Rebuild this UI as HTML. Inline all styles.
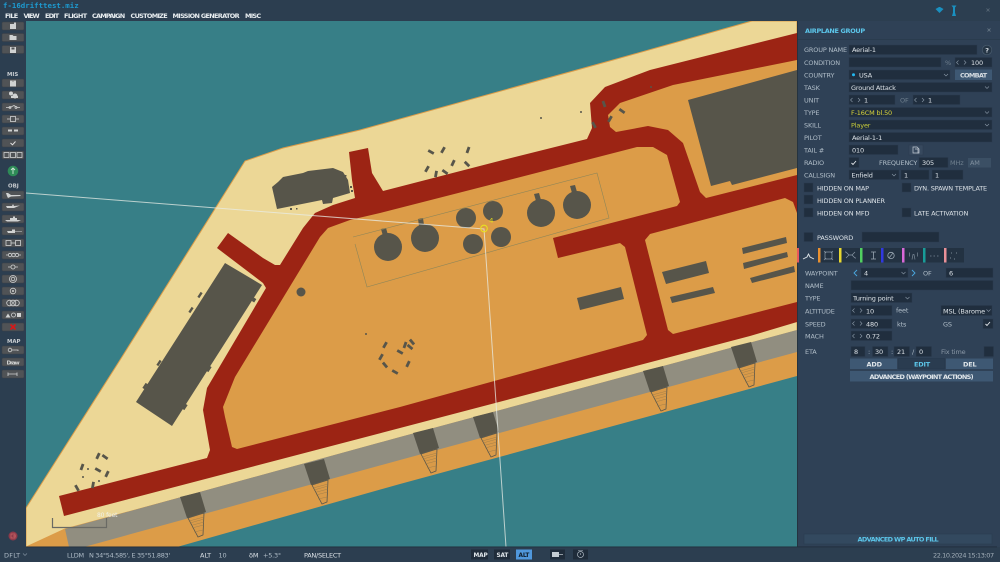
<!DOCTYPE html>
<html><head><meta charset="utf-8"><style>
html,body{margin:0;padding:0;background:#2c3e50;width:1000px;height:562px;overflow:hidden}
svg{display:block}
#root{filter:blur(.25px)}
text{font-family:"DejaVu Sans","Liberation Sans",sans-serif;font-size:6.5px;letter-spacing:-.15px;fill:#b0bdc8}
.m{font-weight:bold;fill:#e8edf0;font-size:6.5px}
.v{fill:#dde3e8}
.i{fill:#202e3e;stroke:#2a3a4c;stroke-width:.5}
.b{fill:#3e5873}
.h{font-weight:bold;fill:#5cc6ea}
.t{fill:#505356;stroke:#3a3e44;stroke-width:.5}
.ic{fill:#d0d2d2;stroke:none}
.il{fill:none;stroke:#d0d2d2;stroke-width:.8}
.d{fill:#57554a}
.c{fill:none;stroke:#8a99a8;stroke-width:.6}
</style></head><body>
<svg id="root" width="1000" height="562" viewBox="0 0 1000 562" xmlns="http://www.w3.org/2000/svg">
<defs>
<polyline id="c" class="c" points="-2,-1 0,1 2,-1"/>
<g id="sp"><polyline class="c" points="1.5,-2 -.5,0 1.5,2"/><polyline class="c" points="7,-2 9,0 7,2"/></g>
<g id="pier">
<polygon class="d" points="0,0 20,-5 26,15 7,21"/>
<polygon points="8,21 24,16 23,38 18,40" fill="#d99a48" stroke="#57554a" stroke-width=".8"/>
<path d="M9,24 L24,20 M10,26 L24,22 M11,28.500 L24,25 M12,31 L23.500,28 M14,35 L23,33" stroke="#96794a" stroke-width=".4" fill="none"/>
</g>
<rect id="v" x="-3.2" y="-1.4" width="6.4" height="2.8" fill="#57554a"/>
</defs>

<rect width="1000" height="562" fill="#2c3e50"/>
<!-- map -->
<rect x="26" y="21" width="771" height="526" fill="#377f87"/>
<svg x="26" y="21" width="771" height="526" viewBox="26 21 771 526">
<polygon points="26,508 120,360 245,161 283,148 360,130 613,60 752,21 797,21 797,331 65,529 26,547" fill="#ecd796" stroke="#dc9c48" stroke-width="1"/>
<polygon points="26,547 65,529 400,437 797,330 797,376 400,484 177,547" fill="#dc9c48"/>
<polygon points="65,529 400,437 797,330 797,352 400,460 84,547 69,547" fill="#918e80"/>
<polygon fill="#9c2414" points="59,496 207,458 210,450 203,410 207,388 266,288 263,283 217,248 228,233 263,258 275,265 280,265 303,228 315,213 333,205 355,198 352,180 349,152 368,148 372,173 383,191 503,160 587,139 592,128 590,103 605,87 650,70 797,33 797,322 750,336 400,428 64,516"/>
<polygon fill="#dc9c48" points="232,447 237,449 400,407 643,340 647,335 625,247 620,243 558,258 553,238 677,206 680,202 667,155 653,147 637,147 540,172 380,213 350,220 328,228 320,237 235,377 223,407 225,417"/>
<polygon fill="#dc9c48" points="645,240 650,234 785,198 793,202 797,213 797,302 673,334 668,330"/>
<polygon fill="#dc9c48" points="608,115 620,103 673,85 797,60 797,175 706,198 700,192 683,143 668,130 648,126 616,132 610,127"/>
<!-- buildings -->
<polygon class="d" points="688,100 797,70 797,168 732,185 730,181 711,186"/>
<polygon class="d" points="225,263 262,285 172,426 136,402"/>
<g class="d"><rect x="-2" y="-1.500" width="4" height="3" transform="translate(254,300) rotate(-57)"/><rect x="-3" y="-1.200" width="6" height="2.400" transform="translate(209,369) rotate(-57)"/><rect x="-3" y="-1.200" width="6" height="2.400" transform="translate(185,407) rotate(-57)"/><rect x="-3" y="-1.200" width="6" height="2.400" transform="translate(145,386) rotate(-57)"/><rect x="-3" y="-1.200" width="6" height="2.400" transform="translate(159,363) rotate(-57)"/><rect x="-3" y="-1.200" width="6" height="2.400" transform="translate(191,310) rotate(-57)"/><rect x="-3" y="-1.200" width="6" height="2.400" transform="translate(200,295) rotate(-57)"/></g>
<polygon class="d" points="272,187 278,182 283,177 303,173 308,171 333,168 343,172 348,180 350,193 333,198 332,203 323,204 322,200 277,209"/>
<g fill="#57554a"><rect x="350" y="186" width="2" height="2"/><rect x="351" y="190" width="2" height="2"/><rect x="345" y="175" width="1.500" height="1.500"/><rect x="290" y="208" width="2" height="2"/><rect x="296" y="208" width="1.500" height="1.500"/></g>
<!-- tanks -->
<g fill="#57554a">
<circle cx="388" cy="247" r="14"/><circle cx="425" cy="238" r="14"/><circle cx="466" cy="218" r="10"/><circle cx="493" cy="211" r="10"/><circle cx="473" cy="244" r="10"/><circle cx="501" cy="237" r="10"/><circle cx="541" cy="213" r="14"/><circle cx="577" cy="205" r="14"/>
<polygon points="381,229 386,228 388,235 383,236"/><polygon points="418,219 423,218 424,225 419,226"/><polygon points="534,194 539,193 541,200 536,201"/><polygon points="570,186 575,185 577,192 572,193"/>
<circle cx="301" cy="292" r="4.500"/>
<polygon points="662,272 706,261 709,273 666,284"/><polygon points="670,297 713,287 715,293 672,303"/><polygon points="742,248 786,237 787,243 743,254"/><polygon points="743,263 787,252 788,257 744,269"/><polygon points="750,278 794,266 795,272 752,283"/><polygon points="577,298 621,287 624,299 580,310"/>
</g>
<polyline points="355,244 367,287 609,218 597,173 353,237" fill="none" stroke="#8f8658" stroke-width=".6"/>
<!-- piers -->
<use href="#pier" x="180" y="497"/><use href="#pier" x="304" y="464"/><use href="#pier" x="413" y="433"/><use href="#pier" x="473" y="417"/><use href="#pier" x="643" y="371"/><use href="#pier" x="731" y="347"/>
<!-- vehicles -->
<use href="#v" transform="translate(427,169) rotate(-60)"/><use href="#v" transform="translate(436,174) rotate(-80)"/><use href="#v" transform="translate(445,172) rotate(35)"/><use href="#v" transform="translate(453,163) rotate(-65)"/><use href="#v" transform="translate(467,164) rotate(45)"/><use href="#v" transform="translate(443,150) rotate(-60)"/><use href="#v" transform="translate(431,152) rotate(30)"/><use href="#v" transform="translate(468,150) rotate(-70)"/>
<use href="#v" transform="translate(98,456) rotate(-65)"/><use href="#v" transform="translate(105,457) rotate(35)"/><use href="#v" transform="translate(82,467) rotate(-70)"/><use href="#v" transform="translate(98,470) rotate(30)"/><use href="#v" transform="translate(107,474) rotate(-65)"/><use href="#v" transform="translate(77,488) rotate(60)"/><use href="#v" transform="translate(93,485) rotate(-80)"/>
<use href="#v" transform="translate(385,345) rotate(-60)"/><use href="#v" transform="translate(405,345) rotate(-70)"/><use href="#v" transform="translate(412,342) rotate(50)"/><use href="#v" transform="translate(400,352) rotate(30)"/><use href="#v" transform="translate(385,365) rotate(50)"/><use href="#v" transform="translate(410,347) rotate(40)"/><use href="#v" transform="translate(408,364) rotate(-65)"/><use href="#v" transform="translate(395,372) rotate(30)"/><use href="#v" transform="translate(381,357) rotate(-60)"/>
<use href="#v" transform="translate(604,104) rotate(70)"/><use href="#v" transform="translate(622,111) rotate(35)"/><use href="#v" transform="translate(610,119) rotate(-60)"/><use href="#v" transform="translate(594,125) rotate(60)"/>
<g fill="#57554a"><circle cx="581" cy="112" r="1"/><circle cx="541" cy="118" r="1"/><circle cx="651" cy="87" r="1"/><circle cx="366" cy="334" r="1"/><circle cx="83" cy="477" r="1"/><circle cx="88" cy="469" r="1"/><circle cx="99" cy="481" r="1"/></g>
<!-- route -->
<polyline points="26,193 484,229 506,547" fill="none" stroke="#e8ece6" stroke-opacity=".75" stroke-width="1"/>
<circle cx="484" cy="228.500" r="3.300" fill="none" stroke="#e8e020" stroke-width="1.100"/>
<text x="489" y="223" style="font-size:7px;fill:#e0d820">4</text>
<!-- scale -->
<polyline points="52.500,518 52.500,527.500 106.500,527.500 106.500,518" fill="none" stroke="#6a6a64" stroke-width="1.200"/>
<text x="97" y="517" style="font-size:6px;fill:#f0f0e8">80 feet</text>
</svg>

<!-- title + menu -->
<text x="3" y="8" style="font-family:'DejaVu Sans Mono','Liberation Mono',monospace;font-size:7.400px;letter-spacing:0;font-weight:bold;fill:#1d9ad0">f-16drifttest.miz</text>
<text class="m" x="5" y="18" textLength="13">FILE</text>
<text class="m" x="23.500" y="18" textLength="16">VIEW</text>
<text class="m" x="45" y="18" textLength="14">EDIT</text>
<text class="m" x="64" y="18" textLength="23">FLIGHT</text>
<text class="m" x="92" y="18" textLength="33">CAMPAIGN</text>
<text class="m" x="130.500" y="18" textLength="37">CUSTOMIZE</text>
<text class="m" x="172.500" y="18" textLength="67">MISSION GENERATOR</text>
<text class="m" x="245" y="18" textLength="16">MISC</text>

<!-- left toolbar -->
<g>
<rect class="t" x="2" y="22" width="22" height="8" rx="1"/><rect class="t" x="2" y="33.500" width="22" height="8" rx="1"/><rect class="t" x="2" y="45.500" width="22" height="8" rx="1"/>
<rect class="t" x="2" y="79" width="22" height="8" rx="1"/><rect class="t" x="2" y="91" width="22" height="8" rx="1"/><rect class="t" x="2" y="103" width="22" height="8" rx="1"/><rect class="t" x="2" y="115" width="22" height="8" rx="1"/><rect class="t" x="2" y="127" width="22" height="8" rx="1"/><rect class="t" x="2" y="139" width="22" height="8" rx="1"/><rect class="t" x="2" y="151" width="22" height="8" rx="1"/>
<rect class="t" x="2" y="191" width="22" height="8" rx="1"/><rect class="t" x="2" y="203" width="22" height="8" rx="1"/><rect class="t" x="2" y="215" width="22" height="8" rx="1"/><rect class="t" x="2" y="227" width="22" height="8" rx="1"/><rect class="t" x="2" y="239" width="22" height="8" rx="1"/><rect class="t" x="2" y="251" width="22" height="8" rx="1"/><rect class="t" x="2" y="263" width="22" height="8" rx="1"/><rect class="t" x="2" y="275" width="22" height="8" rx="1"/><rect class="t" x="2" y="287" width="22" height="8" rx="1"/><rect class="t" x="2" y="299" width="22" height="8" rx="1"/><rect class="t" x="2" y="311" width="22" height="8" rx="1"/><rect class="t" x="2" y="323" width="22" height="8" rx="1"/>
<rect class="t" x="2" y="346" width="22" height="8" rx="1"/><rect class="t" x="2" y="358" width="22" height="8" rx="1"/><rect class="t" x="2" y="370" width="22" height="8" rx="1"/>
<path class="ic" d="M10,24h4v-1.500h2v6.500h-6z"/>
<path class="ic" d="M9.500,35h3l1,1h3v4h-7z"/>
<path class="ic" d="M10,47h6v6h-6z"/><rect x="11.500" y="47.500" width="3" height="2" fill="#505356"/>
<text x="7" y="76" style="font-size:5.400px;letter-spacing:0;font-weight:bold;fill:#c8ccd0">MIS</text>
<path class="ic" d="M10,80.500h6v6h-6z"/><rect x="12" y="80" width="2" height="1.500" fill="#8a8a8a"/>
<path class="ic" d="M11,96h7v2h-7z"/><circle class="ic" cx="11" cy="93.500" r="2"/><circle class="ic" cx="15" cy="96" r="2.500"/>
<path class="il" d="M6,107.500h4l4,-2l3,2h3"/><circle class="il" cx="10" cy="107.500" r="1"/><circle class="il" cx="16" cy="107.500" r="1"/>
<path class="il" d="M7,119h3m6,0h3"/><rect class="il" x="10.500" y="116.500" width="5" height="5"/>
<rect class="ic" x="8" y="129.500" width="4" height="2"/><rect class="ic" x="14" y="129.500" width="4" height="2"/>
<path d="M10.500,143l2,1.800l3,-3.300" fill="none" stroke="#e0e0e0" stroke-width="1"/>
<rect class="il" x="4" y="152.500" width="5" height="5"/><rect class="il" x="10.500" y="152.500" width="5" height="5"/><rect class="il" x="17" y="152.500" width="5" height="5"/>
<circle cx="13" cy="171" r="5.300" fill="#2e8b57"/><path d="M13,168v6M11,170l2,-2l2,2" stroke="#cfe8d8" stroke-width=".9" fill="none"/>
<text x="8" y="187.500" style="font-size:5.400px;letter-spacing:0;font-weight:bold;fill:#c8ccd0">OBJ</text>
<path class="ic" d="M6,193l2,0l3,2l9,0l1,1l-10,.5l-3,1.500l-1,-2z"/>
<path class="ic" d="M6,206l6,0l1,-2l1,2l6,-.5l-6,2.500l-7,0z"/>
<path class="ic" d="M5,220h16l-3,1.500h-11zM10,220v-2h3v-1.500h2v1.500h2v2z"/>
<path class="ic" d="M7,231h5v-1.500h3v1.500h7v.5h-7v1.500h-7z"/>
<rect class="il" x="6" y="240.500" width="5" height="5"/><rect class="il" x="15.500" y="240.500" width="5" height="5"/><path class="il" d="M11,243h4.500"/>
<path class="il" d="M6,255h2m11,0h2"/><circle class="il" cx="10" cy="255" r="1.700"/><circle class="il" cx="13.500" cy="255" r="1.700"/><circle class="il" cx="17" cy="255" r="1.700"/>
<path class="il" d="M8,267h3m4,0h3"/><circle class="il" cx="13" cy="267" r="2"/>
<circle class="il" cx="13" cy="279" r="3.500"/><circle class="il" cx="13" cy="279" r="1.800"/>
<circle class="il" cx="13" cy="291" r="2.800"/><circle class="ic" cx="13" cy="291" r="1"/>
<circle class="il" cx="9.500" cy="303" r="2.800"/><circle class="il" cx="13" cy="303" r="2.800"/><circle class="il" cx="16.500" cy="303" r="2.800"/>
<path class="ic" d="M5.500,317.500l2.500,-4l2.500,4z"/><circle class="il" cx="13.500" cy="315" r="2"/><rect class="ic" x="17" y="313" width="4" height="4"/>
<path d="M10.500,324.500l5,5m0,-5l-5,5" stroke="#d81818" stroke-width="1.600"/>
<text x="7" y="343" style="font-size:5.400px;letter-spacing:0;font-weight:bold;fill:#c8ccd0">MAP</text>
<circle class="il" cx="10" cy="350" r="1.800"/><path class="il" d="M12,350h6v1"/>
<text x="6.500" y="364.300" style="font-size:5.600px;font-weight:bold;fill:#d0d2d2" textLength="13">Draw</text>
<path class="il" d="M8,372.500v3.500M17,372.500v3.500M8,374h9"/>
<circle cx="13" cy="536" r="4.500" fill="#8e3a4a"/><path d="M11,534h4v4h-4zM13,536h3" stroke="#c66" stroke-width=".7" fill="none"/>
</g>

<!-- top right icons -->
<path d="M935.500,9l3.500,-2h1l3.500,2l-4,4z" fill="#1a90c0"/>
<path d="M951.500,5.500h5l-1.500,2v5l1,3.500h-4l1,-3.500v-5z" fill="#1a90c0"/>
<path d="M986.500,8.500l3,3m0,-3l-3,3" stroke="#5b6a78" stroke-width=".8"/>

<!-- right panel -->
<rect x="797" y="21" width="203" height="526" fill="#2f4156"/>
<rect x="797" y="21" width="1" height="526" fill="#25333f"/>
<rect x="798" y="39" width="202" height=".6" fill="#28384a"/>
<text class="h" x="805" y="33" style="font-size:6.500px" textLength="60">AIRPLANE GROUP</text>
<path d="M987.500,28.500l3,3m0,-3l-3,3" stroke="#6a7a88" stroke-width=".8"/>

<text x="804" y="52">GROUP NAME</text>
<rect class="i" x="849" y="45" width="128" height="9.500"/><text class="v" x="852" y="52.200">Aerial-1</text>
<circle cx="987" cy="50" r="4.800" fill="#263646" stroke="#4d6072" stroke-width=".6"/><text x="985.300" y="52.500" style="font-size:6.500px;font-weight:bold;fill:#d5dce2">?</text>

<text x="804" y="65">CONDITION</text>
<rect class="i" x="849" y="57.500" width="92" height="9.500"/><text x="945" y="65" style="fill:#6f7f8e">%</text>
<rect class="i" x="955" y="57.500" width="37" height="9.500"/><use href="#sp" x="957" y="62.500"/><text class="v" x="971" y="65">100</text>

<text x="804" y="77.500">COUNTRY</text>
<rect class="i" x="849" y="70" width="101" height="9.500"/><circle cx="853.500" cy="74.700" r="1.500" fill="#22b8f0"/><text class="v" x="859" y="77.500">USA</text><use href="#c" x="946" y="75"/>
<rect x="955" y="69.500" width="37" height="10.500" fill="#3e5873"/><text x="960" y="77.500" style="font-weight:bold;fill:#d5dce2" textLength="27">COMBAT</text>

<text x="804" y="90">TASK</text>
<rect class="i" x="849" y="82.500" width="143" height="9.500"/><text class="v" x="851" y="90">Ground Attack</text><use href="#c" x="987" y="87.500"/>

<text x="804" y="102.500">UNIT</text>
<rect class="i" x="849" y="95" width="46" height="9.500"/><use href="#sp" x="851" y="100"/><text class="v" x="864" y="102.500">1</text>
<text x="900" y="102.500" style="fill:#6f7f8e">OF</text>
<rect class="i" x="913" y="95" width="47" height="9.500"/><use href="#sp" x="915" y="100"/><text class="v" x="928" y="102.500">1</text>

<text x="804" y="115">TYPE</text>
<rect class="i" x="849" y="107.500" width="143" height="9.500"/><text x="851" y="115" style="fill:#d8d43a">F-16CM bl.50</text><use href="#c" x="987" y="112.500"/>

<text x="804" y="127.500">SKILL</text>
<rect class="i" x="849" y="120" width="143" height="9.500"/><text x="851" y="127.500" style="fill:#c8cc3a">Player</text><use href="#c" x="987" y="125"/>

<text x="804" y="140">PILOT</text>
<rect class="i" x="849" y="132.500" width="143" height="9.500"/><text class="v" x="852" y="140">Aerial-1-1</text>

<text x="804" y="152.500">TAIL #</text>
<rect class="i" x="849" y="145" width="49" height="9.500"/><text class="v" x="852" y="152.500">010</text>
<rect x="909" y="145" width="14" height="10" fill="#37495e" stroke="#2a3a4c" stroke-width=".5"/><path d="M913,147h4l2,2v4h-6zM915,149h3v4.500" fill="none" stroke="#c4ccd4" stroke-width=".7"/>

<text x="804" y="165">RADIO</text>
<rect class="i" x="849" y="157.500" width="10" height="10"/><path d="M851.500,163l1.500,1.500l3,-3.500" fill="none" stroke="#e8ecf0" stroke-width=".9"/>
<text x="879" y="165">FREQUENCY</text>
<rect class="i" x="919" y="157.500" width="29" height="10"/><text class="v" x="922" y="165">305</text>
<text x="950" y="165" style="fill:#6f7f8e">MHz</text>
<rect x="968" y="158" width="23" height="9.500" fill="#3b4f64"/><text x="970" y="165" style="fill:#7f8f9e">AM</text>

<text x="804" y="177.500">CALLSIGN</text>
<rect class="i" x="849" y="170" width="50" height="9.500"/><text class="v" x="851.500" y="177.500">Enfield</text><use href="#c" x="894" y="175"/>
<rect class="i" x="901" y="170" width="28" height="9.500"/><text class="v" x="904" y="177.500">1</text>
<rect class="i" x="932" y="170" width="31" height="9.500"/><text class="v" x="935" y="177.500">1</text>

<rect class="i" x="804" y="183" width="9" height="9"/><text class="v" x="817" y="190.500">HIDDEN ON MAP</text>
<rect class="i" x="902" y="183" width="9" height="9"/><text class="v" x="914" y="190.500" textLength="73">DYN. SPAWN TEMPLATE</text>
<rect class="i" x="804" y="195" width="9" height="9"/><text class="v" x="817" y="203">HIDDEN ON PLANNER</text>
<rect class="i" x="804" y="208" width="9" height="9"/><text class="v" x="817" y="215.500">HIDDEN ON MFD</text>
<rect class="i" x="902" y="208" width="9" height="9"/><text class="v" x="914" y="215.500">LATE ACTIVATION</text>
<rect class="i" x="804" y="232.500" width="9" height="9"/><text class="v" x="817" y="240">PASSWORD</text>
<rect class="i" x="862" y="232" width="77" height="10"/>

<!-- tabs -->
<rect x="797" y="248" width="167" height="14.500" fill="#233242"/>
<rect x="797" y="248" width="21" height="14.500" fill="#2f4156"/>
<rect x="797" y="248" width="2" height="14.500" fill="#e8585c"/>
<rect x="818" y="248" width="2.500" height="14.500" fill="#e89030"/>
<rect x="839" y="248" width="2.500" height="14.500" fill="#e8d830"/>
<rect x="860" y="248" width="2.500" height="14.500" fill="#50d060"/>
<rect x="881" y="248" width="2.500" height="14.500" fill="#3038e0"/>
<rect x="902" y="248" width="2.500" height="14.500" fill="#d868d8"/>
<rect x="923" y="248" width="2.500" height="14.500" fill="#189c98"/>
<rect x="944" y="248" width="2.500" height="14.500" fill="#e89098"/>
<path d="M803,259l4,-2l1.500,-3l1.500,3l4,2" fill="none" stroke="#e0e6ea" stroke-width=".9"/>
<path d="M825,252h7v7h-7zM824,251l2,2M833,251l-2,2M824,260l2,-2M833,260l-2,-2" fill="none" stroke="#8a98a6" stroke-width=".7"/>
<path d="M846,252l3,3l-3,3M855,252l-3,3l3,3M849,255h3M846,252h-1M855,258h1" fill="none" stroke="#8a98a6" stroke-width=".7"/>
<path d="M871,252h5M873.500,252v7M871,259h5" fill="none" stroke="#9aa8b4" stroke-width=".8"/>
<circle cx="891" cy="255.500" r="3.200" fill="none" stroke="#9aa8b4" stroke-width=".8"/><path d="M889,258l4,-5" stroke="#9aa8b4" stroke-width=".7"/>
<path d="M912,259.500l1,-5h1l1,5M909.500,252.500v4M917.500,252.500v4" fill="none" stroke="#7a8896" stroke-width=".7"/>
<path d="M930,256h1.500M933.500,256h1.500M937,256h1.500" stroke="#7a8896" stroke-width=".8"/>
<path d="M951,253h1M956,253h1M950,258h1M954,259h1" stroke="#7a8896" stroke-width=".9"/>

<!-- waypoint -->
<text x="805" y="275.500">WAYPOINT</text>
<polyline points="857,270 854,273 857,276" fill="none" stroke="#4aa8e0" stroke-width=".9"/>
<rect class="i" x="861" y="268" width="47" height="9.500"/><text class="v" x="864" y="275.500">4</text><use href="#c" x="903.500" y="273"/>
<polyline points="912,270 915,273 912,276" fill="none" stroke="#4aa8e0" stroke-width=".9"/>
<text x="923" y="275.500">OF</text>
<rect class="i" x="946" y="268" width="47" height="9.500"/><text class="v" x="949" y="275.500">6</text>

<text x="805" y="288">NAME</text>
<rect class="i" x="851" y="280.500" width="142" height="9.500"/>

<text x="805" y="300.500">TYPE</text>
<rect class="i" x="851" y="293" width="61" height="9.500"/><text class="v" x="853" y="300.500">Turning point</text><use href="#c" x="907.500" y="298"/>

<text x="805" y="313.500">ALTITUDE</text>
<rect class="i" x="851" y="305.500" width="41" height="10"/><use href="#sp" x="853" y="310.500"/><text class="v" x="866" y="313.500">10</text>
<text x="896" y="312.500">feet</text>
<rect class="i" x="941" y="305.500" width="51" height="10"/><text class="v" x="943" y="313.500" textLength="42">MSL (Barome</text><use href="#c" x="988.500" y="310.500"/>

<text x="805" y="326.500">SPEED</text>
<rect class="i" x="851" y="319" width="41" height="9.500"/><use href="#sp" x="853" y="323.500"/><text class="v" x="866" y="326.500">480</text>
<text x="897" y="326.500">kts</text>
<text x="943" y="326.500">GS</text>
<rect class="i" x="983" y="319" width="10" height="9.500"/><path d="M985.500,324l1.500,1.500l3,-3.500" fill="none" stroke="#e8ecf0" stroke-width=".9"/>

<text x="805" y="338.500">MACH</text>
<rect class="i" x="851" y="331" width="41" height="9.500"/><use href="#sp" x="853" y="336"/><text class="v" x="866" y="338.500">0.72</text>

<text x="805" y="354">ETA</text>
<rect class="i" x="851" y="346.500" width="14" height="10"/><text class="v" x="854" y="354">8</text>
<text x="868" y="354">:</text>
<rect class="i" x="872.500" y="346.500" width="15.500" height="10"/><text class="v" x="875" y="354">30</text>
<text x="891" y="354">:</text>
<rect class="i" x="894" y="346.500" width="15.500" height="10"/><text class="v" x="897" y="354">21</text>
<text x="912" y="354">/</text>
<rect class="i" x="916" y="346.500" width="15.500" height="10"/><text class="v" x="919" y="354">0</text>
<text x="941" y="354" style="fill:#8a98a6">Fix time</text>
<rect class="i" x="984" y="346.500" width="9.500" height="10"/>

<rect class="b" x="850" y="358.500" width="47" height="10.500"/><text x="866.500" y="366.500" style="font-weight:bold;fill:#e0e6ea">ADD</text>
<rect x="898.500" y="358.500" width="46" height="10.500" fill="#2a3c50" stroke="#25364a" stroke-width=".5"/><text x="914" y="366.500" style="font-weight:bold;fill:#5cc6ea">EDIT</text>
<rect class="b" x="946" y="358.500" width="47" height="10.500"/><text x="963" y="366.500" style="font-weight:bold;fill:#e0e6ea">DEL</text>
<rect class="b" x="850" y="371" width="143" height="10.500"/><text x="869.500" y="379" style="font-weight:bold;fill:#e0e6ea" textLength="104">ADVANCED (WAYPOINT ACTIONS)</text>

<rect x="804" y="534" width="188" height="10" fill="#33495f" stroke="#2a3c50" stroke-width=".6"/>
<text class="h" x="857.500" y="541.500" textLength="81">ADVANCED WP AUTO FILL</text>

<!-- status bar -->
<rect x="0" y="547" width="1000" height="15" fill="#2c3e50"/>
<rect x="26" y="546.500" width="971" height=".8" fill="#1f2c3a"/>
<text x="4" y="557.500" textLength="16">DFLT</text><use href="#c" x="25" y="554.500"/>
<text x="67" y="557.500" textLength="17">LLDM</text>
<text x="89" y="557.500" textLength="81">N 34°54.585', E 35°51.883'</text>
<text class="v" x="200" y="557.500" textLength="11">ALT</text><text x="218.500" y="557.500">10</text>
<text class="v" x="249" y="557.500">δM</text><text x="263" y="557.500" textLength="18">+5.3°</text>
<text class="v" x="304" y="557.500" textLength="37">PAN/SELECT</text>
<rect x="471" y="549.500" width="17" height="10" fill="#1f2c3a"/><text x="473.500" y="557" style="font-weight:bold;fill:#e0e6ea;font-size:5.800px">MAP</text>
<rect x="494" y="549.500" width="16" height="10" fill="#1f2c3a"/><text x="496.500" y="557" style="font-weight:bold;fill:#e0e6ea;font-size:5.800px">SAT</text>
<rect x="516" y="549.500" width="16" height="10" fill="#5098dc"/><text x="518.500" y="557" style="font-weight:bold;fill:#10202e;font-size:5.800px">ALT</text>
<rect x="550" y="549.500" width="15" height="10" fill="#1f2c3a"/><rect x="552" y="552" width="7" height="5" fill="#c4ccd2"/><path d="M559,554.500h4" stroke="#c4ccd2" stroke-width=".7"/>
<rect x="573" y="549.500" width="15" height="10" fill="#1f2c3a"/><circle cx="580.500" cy="554.500" r="3" fill="none" stroke="#b0bac4" stroke-width=".7"/><path d="M578,550.500h5M580.500,553v2" stroke="#b0bac4" stroke-width=".6"/>
<text x="933" y="557.500" textLength="61" style="fill:#a4b0ba">22.10.2024 15:13:07</text>
</svg>
</body></html>
